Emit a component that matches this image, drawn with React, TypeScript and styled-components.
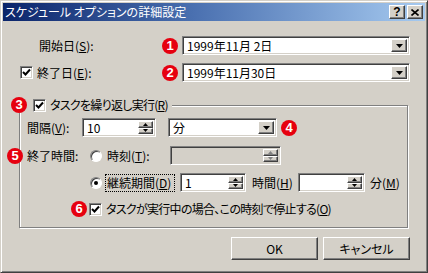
import React from "react";
import styled, { createGlobalStyle, css } from "styled-components";

const GlobalStyle = createGlobalStyle`
  html, body {
    margin: 0;
    padding: 0;
    background: #d4d0c8;
  }
  body {
    font-family: "Noto Sans CJK JP", "Noto Sans", sans-serif;
    font-size: 12px;
    line-height: 14px;
    font-feature-settings: "palt";
    color: #000;
  }
  u { text-decoration-thickness: 1px; text-underline-offset: 1px; }
`;

const sunken = css`
  box-sizing: border-box;
  border: 1px solid;
  border-color: #808080 #fff #fff #808080;
  box-shadow: inset 1px 1px 0 #404040, inset -1px -1px 0 #d4d0c8;
`;

const raised = css`
  box-sizing: border-box;
  border: 1px solid;
  border-color: #fff #404040 #404040 #fff;
  box-shadow: inset -1px -1px 0 #808080;
  background: #d4d0c8;
`;

const Window = styled.div`
  box-sizing: border-box;
  width: 428px;
  height: 273px;
  background: #d4d0c8;
  border: 1px solid;
  border-color: #d4d0c8 #404040 #404040 #d4d0c8;
  box-shadow: inset 1px 1px 0 #fff, inset -1px -1px 0 #808080;
  padding: 2px;
  display: flex;
  flex-direction: column;
`;

const TitleBar = styled.div`
  flex: none;
  height: 18px;
  display: flex;
  align-items: center;
  padding: 0 2px 0 2px;
  background: linear-gradient(90deg, #0a246a 0%, #4a70b0 45%, #a6caf0 100%);
  color: #fff;
`;

const TitleText = styled.span`
  flex: 1;
  white-space: nowrap;
`;

const CaptionButton = styled.span`
  ${raised};
  width: 16px;
  height: 14px;
  display: flex;
  align-items: center;
  justify-content: center;
  color: #000;
  font: bold 12px "Liberation Sans", sans-serif;
  & + & { margin-left: 2px; }
`;

const Body = styled.div`
  flex: 1;
  display: flex;
  flex-direction: column;
  padding: 15px 15px 0 16px;
`;

const DateRow = styled.div<{ $gap?: number }>`
  display: flex;
  align-items: center;
  height: 19px;
  margin-left: 1px;
  margin-top: ${(p) => p.$gap ?? 0}px;
`;

const LeftCell = styled.div<{ $pad?: number }>`
  width: 142px;
  display: flex;
  align-items: center;
  padding-left: ${(p) => p.$pad ?? 0}px;
  box-sizing: border-box;
  white-space: nowrap;
`;

const Badge = styled.span<{ $after?: number; $before?: number }>`
  flex: none;
  width: 16px;
  height: 16px;
  border-radius: 50%;
  background: #e6000f;
  color: #fff;
  font: bold 13px/16px "Liberation Sans", sans-serif;
  text-align: center;
  margin-left: ${(p) => p.$before ?? 0}px;
  margin-right: ${(p) => p.$after ?? 4}px;
`;

const Field = styled.div<{ $w?: number; $disabled?: boolean }>`
  ${sunken};
  flex: ${(p) => (p.$w ? "none" : "1")};
  width: ${(p) => (p.$w ? `${p.$w}px` : "auto")};
  height: 19px;
  background: ${(p) => (p.$disabled ? "#d4d0c8" : "#fff")};
  display: flex;
  align-items: stretch;
  padding: 2px;
`;

const FieldText = styled.span`
  flex: 1;
  padding-left: 2px;
  display: flex;
  align-items: center;
  white-space: pre;
`;

const DropButton = styled.span`
  ${raised};
  width: 16px;
  display: flex;
  align-items: center;
  justify-content: center;
`;

const SpinColumn = styled.span`
  width: 15px;
  display: flex;
  flex-direction: column;
`;

const SpinButton = styled.span`
  ${raised};
  flex: 1;
  display: flex;
  align-items: center;
  justify-content: center;
`;

const Group = styled.div`
  position: relative;
  margin: 23px 2px 0 0;
  border: 1px solid #808080;
  box-shadow: 1px 1px 0 #fff, inset 1px 1px 0 #fff;
  padding: 12px 0 11px 7px;
  display: flex;
  flex-direction: column;
`;

const Legend = styled.div`
  position: absolute;
  top: -9px;
  left: -9px;
  display: flex;
  align-items: center;
  background: #d4d0c8;
  padding-right: 4px;
  white-space: nowrap;
`;

const GroupRow = styled.div<{ $gap?: number; $indent?: number; $h?: number }>`
  display: flex;
  align-items: center;
  height: ${(p) => p.$h ?? 19}px;
  margin-top: ${(p) => p.$gap ?? 0}px;
  padding-left: ${(p) => p.$indent ?? 0}px;
  white-space: nowrap;
`;

const Label = styled.span<{ $w?: number; $pad?: number }>`
  flex: none;
  box-sizing: border-box;
  width: ${(p) => (p.$w ? `${p.$w}px` : "auto")};
  padding-left: ${(p) => p.$pad ?? 0}px;
`;

const Tight = styled.span`
  letter-spacing: -0.7px;
`;

const FocusLabel = styled.span`
  box-sizing: border-box;
  width: 70px;
  height: 18px;
  border: 1px dotted #000;
  padding: 1px 1px 0;
  margin-right: 5px;
`;

const Box = styled.span<{ $after?: number }>`
  ${sunken};
  flex: none;
  width: 13px;
  height: 13px;
  background: #fff;
  display: flex;
  align-items: center;
  justify-content: center;
  margin-right: ${(p) => p.$after ?? 4}px;
`;

const Radio = styled.span<{ $on?: boolean; $after?: number }>`
  flex: none;
  box-sizing: border-box;
  width: 12px;
  height: 12px;
  border-radius: 50%;
  border: 1px solid;
  border-color: #808080 #fff #fff #808080;
  box-shadow: inset 1px 1px 0 #404040;
  background: #fff;
  margin-right: ${(p) => p.$after ?? 5}px;
  position: relative;
  &::after {
    content: "";
    display: ${(p) => (p.$on ? "block" : "none")};
    position: absolute;
    left: 3px;
    top: 3px;
    width: 4px;
    height: 4px;
    border-radius: 50%;
    background: #000;
  }
`;

const ButtonRow = styled.div`
  display: flex;
  justify-content: flex-end;
  gap: 5px;
  margin-top: 9px;
`;

const PushButton = styled.button`
  ${raised};
  width: 87px;
  height: 23px;
  padding: 0;
  font: inherit;
  color: #000;
`;

const Arrow = ({ down = true, w = 7, h = 4, color = "#000" }: { down?: boolean; w?: number; h?: number; color?: string }) => (
  <svg width={w} height={h} viewBox={`0 0 ${w} ${h}`}>
    <polygon
      points={down ? `0,0 ${w},0 ${w / 2},${h}` : `0,${h} ${w},${h} ${w / 2},0`}
      fill={color}
    />
  </svg>
);

const Check = () => (
  <svg width="9" height="9" viewBox="0 0 9 9">
    <polyline points="1,4 3.5,6.5 8,1.5" fill="none" stroke="#000" strokeWidth="2" />
  </svg>
);

const Combo = ({ value, w }: { value: string; w?: number }) => (
  <Field $w={w}>
    <FieldText>{value}</FieldText>
    <DropButton>
      <Arrow />
    </DropButton>
  </Field>
);

const Spin = ({ value = "", w, disabled }: { value?: string; w: number; disabled?: boolean }) => {
  const c = disabled ? "#808080" : "#000";
  return (
    <Field $w={w} $disabled={disabled}>
      <FieldText>{value}</FieldText>
      <SpinColumn>
        <SpinButton>
          <Arrow down={false} w={5} h={3} color={c} />
        </SpinButton>
        <SpinButton>
          <Arrow w={5} h={3} color={c} />
        </SpinButton>
      </SpinColumn>
    </Field>
  );
};

export default function App() {
  return (
    <>
      <GlobalStyle />
      <Window>
        <TitleBar>
          <TitleText>スケジュール オプションの詳細設定</TitleText>
          <CaptionButton>?</CaptionButton>
          <CaptionButton>
            <svg width="8" height="7" viewBox="0 0 8 7">
              <path d="M0.5 0.5 L7.5 6.5 M7.5 0.5 L0.5 6.5" stroke="#000" strokeWidth="1.6" />
            </svg>
          </CaptionButton>
        </TitleBar>
        <Body>
          <DateRow>
            <LeftCell $pad={19}>
              開始日(<u>S</u>):
            </LeftCell>
            <Badge>1</Badge>
            <Combo value="1999年11月 2日" />
          </DateRow>
          <DateRow $gap={8}>
            <LeftCell>
              <Box>
                <Check />
              </Box>
              終了日(<u>E</u>):
            </LeftCell>
            <Badge>2</Badge>
            <Combo value="1999年11月30日" />
          </DateRow>

          <Group>
            <Legend>
              <Badge $after={6}>3</Badge>
              <Box>
                <Check />
              </Box>
              <Tight>
                タスクを繰り返し実行(<u>R</u>)
              </Tight>
            </Legend>

            <GroupRow>
              <Label $w={55}>
                間隔(<u>V</u>):
              </Label>
              <Spin value="10" w={74} />
              <Label $w={12} />
              <Combo value="分" w={109} />
              <Label $w={4} />
              <Badge>4</Badge>
            </GroupRow>

            <GroupRow $gap={9}>
              <Badge $before={-20}>5</Badge>
              <Label $w={63}>終了時間:</Label>
              <Radio />
              <Label $w={63}>
                時刻(<u>T</u>):
              </Label>
              <Spin w={111} disabled />
            </GroupRow>

            <GroupRow $gap={8} $indent={63}>
              <Radio $on $after={3} />
              <FocusLabel>
                継続期間(<u>D</u>)
              </FocusLabel>
              <Spin value="1" w={66} />
              <Label $w={52} $pad={6}>
                時間(<u>H</u>)
              </Label>
              <Spin w={67} />
              <Label $pad={5}>
                分(<u>M</u>)
              </Label>
            </GroupRow>

            <GroupRow $gap={10} $indent={44} $h={14}>
              <Badge $after={2}>6</Badge>
              <Box>
                <Check />
              </Box>
              <Tight>
                タスクが実行中の場合、この時刻で停止する(<u>O</u>)
              </Tight>
            </GroupRow>
          </Group>

          <ButtonRow>
            <PushButton>OK</PushButton>
            <PushButton>キャンセル</PushButton>
          </ButtonRow>
        </Body>
      </Window>
    </>
  );
}
